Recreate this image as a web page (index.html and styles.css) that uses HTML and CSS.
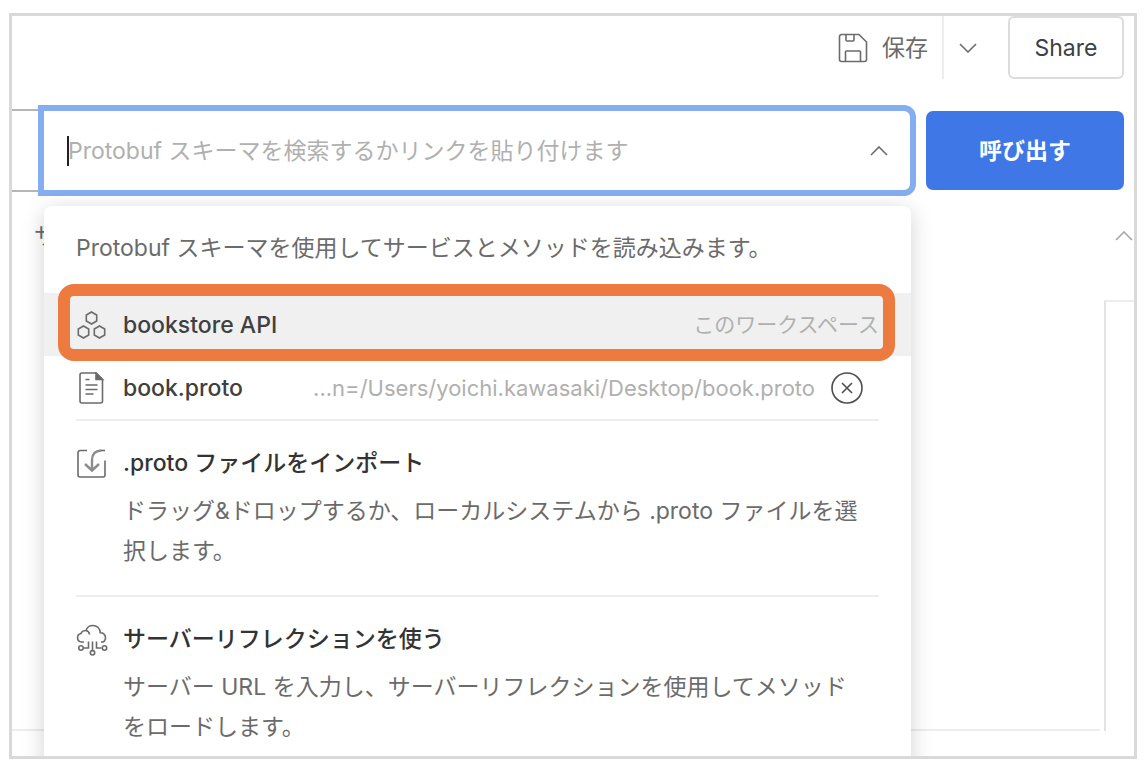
FILE: index.html
```html
<!DOCTYPE html>
<html lang="ja">
<head>
<meta charset="UTF-8">
<meta name="viewport" content="width=device-width, initial-scale=1.0">
<title>bookstore API</title>
<link rel="stylesheet" href="styles.css">
</head>
<body>

<div class="window">

  <header class="toolbar">
    <button class="save-btn" type="button">
      <svg class="icon" width="30" height="30" viewBox="0 0 30 30">
        <path d="M3.500 1.500H21l7.500 7.500v17.500a2 2 0 0 1-2 2h-23a2 2 0 0 1-2-2v-23a2 2 0 0 1 2-2z"/>
        <path d="M8 1.500v5.500a1 1 0 0 0 1 1h6a1 1 0 0 0 1-1V1.500M7.500 28.500V19a1 1 0 0 1 1-1h13a1 1 0 0 1 1 1v9.500"/>
      </svg>
      保存
    </button>
    <button class="more-btn" type="button" aria-label="保存">
      <svg class="icon" width="18" height="10" viewBox="0 0 18 10"><path d="M1 1l8 8 8-8"/></svg>
    </button>
    <button class="share-btn" type="button">Share</button>
  </header>

  <div class="url-row">
    <div class="url-field"></div>
    <div class="combo">
      <span class="caret"></span>
      <input class="combo-input" type="text" aria-label="Protobuf" placeholder="Protobuf スキーマを検索するかリンクを貼り付けます">
      <svg class="icon" width="18" height="10" viewBox="0 0 18 10"><path d="M1 9l8-8 8 8"/></svg>

      <div class="menu">
        <p class="menu-intro">Protobuf スキーマを使用してサービスとメソッドを読み込みます。</p>

        <div class="row selected">
          <button class="row-main" type="button">
            <svg class="icon" width="32" height="32" viewBox="0 0 32 32">
              <path d="M15.500 3l5.200 3v6l-5.200 3-5.200-3V6z"/>
              <path d="M7.500 17l5.200 3v6l-5.200 3-5.200-3v-6z"/>
              <path d="M23.500 17l5.200 3v6l-5.200 3-5.200-3v-6z"/>
            </svg>
            <span class="row-name">bookstore API</span>
            <span class="row-note">このワークスペース</span>
          </button>
          <div class="highlight"></div>
        </div>

        <div class="row">
          <button class="row-main" type="button">
            <svg class="icon" width="32" height="32" viewBox="0 0 32 32">
              <path d="M6 1h14l6.500 6.500V29a2 2 0 0 1-2 2H6a2 2 0 0 1-2-2V3a2 2 0 0 1 2-2z"/>
              <path class="solid" d="M20 1l6.500 6.500H20z"/>
              <path d="M9.500 7.500h4M9.500 13h12M9.500 17.500h12M9.500 22h8"/>
            </svg>
            <span class="row-name">book.proto</span>
            <span class="row-note path">...n=/Users/yoichi.kawasaki/Desktop/book.proto</span>
          </button>
          <button class="clear-btn" type="button" aria-label="book.proto">
            <svg class="icon" width="32" height="32" viewBox="0 0 32 32"><circle cx="16" cy="16" r="15"/><path d="M11 11l10 10M21 11L11 21"/></svg>
          </button>
        </div>

        <button class="option" type="button">
          <svg class="icon" width="32" height="32" viewBox="0 0 32 32">
            <path d="M11 2.500H4a2 2 0 0 0-2 2V27a2 2 0 0 0 2 2h23a2 2 0 0 0 2-2V12.500"/>
            <path d="M29 2.500h-5"/>
            <path class="arrow" d="M25 2.500q-9 .5-9 9.500v10M9 16l7 6.500 7-6.500"/>
          </svg>
          <span class="option-body">
            <span class="option-title">.proto ファイルをインポート</span>
            <span class="option-text">ドラッグ&amp;ドロップするか、ローカルシステムから .proto ファイルを選択します。</span>
          </span>
        </button>

        <button class="option" type="button">
          <svg class="icon" width="32" height="32" viewBox="0 0 32 32">
            <path d="M8 18H5.500a4.300 4.300 0 0 1-.5-8.500Q6 6.500 10 6.500C11 3 14 1.500 17 1.500c4 0 7.200 3 7.200 7.200a5 5 0 0 1 2.800 9.300h-2"/>
            <path d="M10 6.500q3 .5 3.500 4M12.500 17.500V24H7.500M16.500 17.500V27M20.500 17.500V24h5"/>
            <circle cx="5" cy="24" r="2.200"/>
            <circle cx="16.500" cy="28.800" r="2.200"/>
            <circle cx="28.500" cy="24" r="2.200"/>
          </svg>
          <span class="option-body">
            <span class="option-title">サーバーリフレクションを使う</span>
            <span class="option-text">サーバー URL を入力し、サーバーリフレクションを使用してメソッドをロードします。</span>
          </span>
        </button>
      </div>
    </div>
    <button class="invoke-btn" type="button">呼び出す</button>
  </div>

  <div class="section-head">
    <span>サ</span>
    <svg class="icon" width="18" height="10" viewBox="0 0 18 10"><path d="M1 9l8-8 8 8"/></svg>
  </div>

  <div class="editor">
    <div class="editor-main"></div>
    <div class="editor-side"></div>
  </div>

</div>

</body>
</html>
```
FILE: styles.css
```css
* {
  box-sizing: border-box;
  padding: 0;
  margin: 0;
}

body {
  height: 100vh;
  padding: 13px 9px 11px;
  background: #fff;
  color: #6b6b6b;
  font-family: Inter, "Noto Sans CJK JP", sans-serif;
  font-size: 23px;
  line-height: 40px;
}

button, input {
  border: 0;
  background: none;
  color: inherit;
  font: inherit;
}

.icon {
  display: block;
  flex: none;
  fill: none;
  stroke: #6b6b6b;
  stroke-width: 1.6;
}

.icon .solid {
  fill: #6b6b6b;
}

.icon .arrow {
  stroke: #8c8c8c;
  stroke-width: 2.4;
}

.window {
  display: flex;
  flex-direction: column;
  height: 100%;
  border: 3px solid #d9d9d9;
  overflow: hidden;
}

/* toolbar */
.toolbar {
  display: flex;
  justify-content: flex-end;
  height: 63px;
  padding-right: 10px;
}

.save-btn {
  display: flex;
  align-items: center;
  gap: 14px;
  padding-right: 14px;
  border-right: 2px solid #ededed;
}

.more-btn {
  display: flex;
  align-items: center;
  padding: 0 31px 0 15px;
}

.share-btn {
  width: 116px;
  border: 2px solid #dcdcdc;
  border-radius: 6px;
  color: #404040;
}

/* url row */
.url-row {
  display: flex;
  align-items: center;
  margin-top: 26px;
  padding-right: 10px;
}

.url-field {
  width: 26px;
  height: 83px;
  border: solid #b5b5b5;
  border-width: 2px 0;
}

.combo {
  position: relative;
  display: flex;
  flex: 1;
  align-items: center;
  height: 91px;
  padding: 0 22px 0 24px;
  border: 6px solid #85adf2;
  border-radius: 0 12px 12px 0;
}

.combo-input {
  flex: 1;
  min-width: 0;
  height: 79px;
  outline: none;
}

.combo-input::placeholder {
  color: #b0b0b0;
  opacity: 1;
}

.caret {
  position: absolute;
  left: 23px;
  top: 25px;
  width: 2px;
  height: 30px;
  background: #212121;
}

.invoke-btn {
  width: 198px;
  height: 79px;
  margin-left: 10px;
  border-radius: 7px;
  background: #4077e6;
  color: #fff;
  font-weight: 700;
}

/* dropdown */
.menu {
  position: absolute;
  z-index: 1;
  top: 95px;
  left: 0;
  right: -1px;
  border-radius: 8px 8px 0 0;
  background: #fff;
  box-shadow: 0 4px 22px rgba(0, 0, 0, 0.18);
}

.menu-intro {
  padding: 22px 32px 25px;
}

.row {
  position: relative;
  display: flex;
  align-items: center;
  height: 63px;
  padding: 0 32px;
}

.row.selected {
  background: #f0f0f0;
}

.row-main {
  display: flex;
  flex: 1;
  align-items: center;
  text-align: left;
}

.row-name {
  flex: 1;
  margin-left: 15px;
  color: #404040;
  font-weight: 500;
}

.row-note {
  color: #b0b0b0;
  font-size: 21px;
}

.row-note.path {
  font-size: 22px;
}

.clear-btn {
  margin: 0 16px;
}

.clear-btn .icon {
  stroke: #4d4d4d;
}

.highlight {
  position: absolute;
  top: -9px;
  right: 16px;
  bottom: -5px;
  left: 14px;
  border: 12px solid #ed7b40;
  border-radius: 16px;
  pointer-events: none;
}

.option {
  display: flex;
  align-items: flex-start;
  width: calc(100% - 64px);
  margin: 0 32px;
  padding: 22px 0 24px;
  border-top: 2px solid #ededed;
  text-align: left;
}

.option .icon {
  margin-top: 5px;
}

.option-body {
  display: flex;
  flex: 1;
  flex-direction: column;
  gap: 8px;
  margin-left: 15px;
}

.option-title {
  color: #333;
  font-weight: 500;
}

.option-text {
  padding-right: 12px;
}

/* area behind the dropdown */
.section-head {
  display: flex;
  align-items: center;
  justify-content: space-between;
  padding: 20px 1px 20px 22px;
}

.section-head .icon {
  stroke: #a6a6a6;
}

.editor {
  display: flex;
  flex: 1;
  gap: 4px;
  margin: 24px 0 25px;
}

.editor-main {
  flex: 1;
  border-bottom: 2px solid #ededed;
}

.editor-side {
  width: 30px;
  border-top: 2px solid #ededed;
  border-left: 2px solid #e3e3e3;
}
```
